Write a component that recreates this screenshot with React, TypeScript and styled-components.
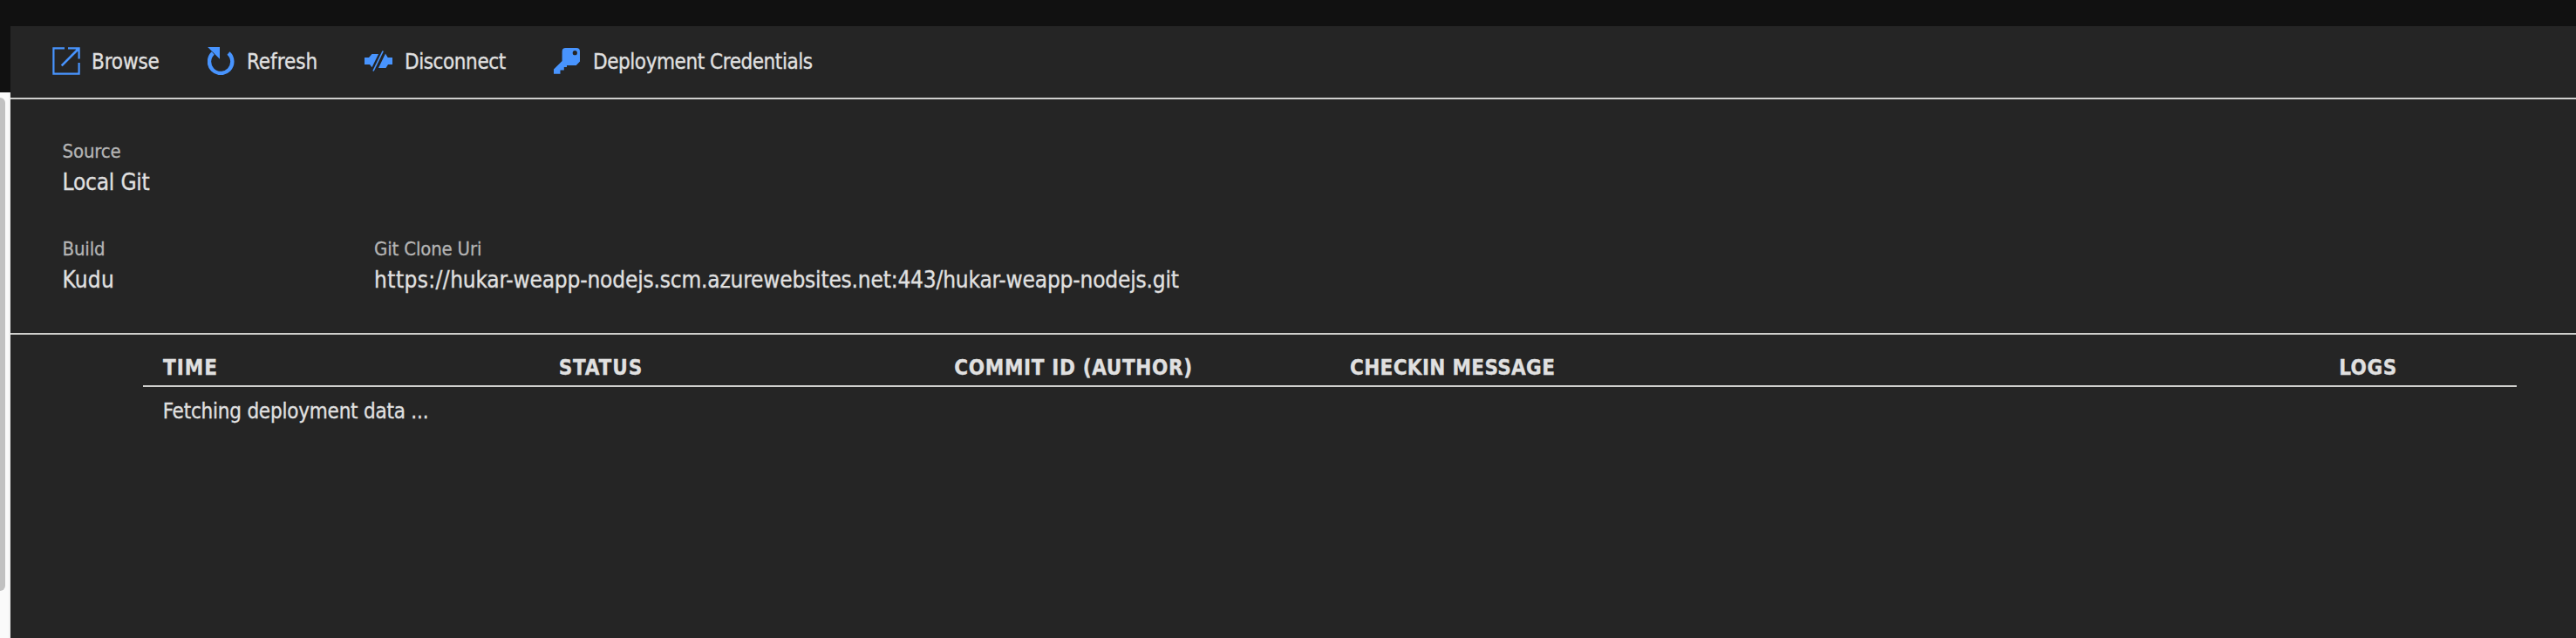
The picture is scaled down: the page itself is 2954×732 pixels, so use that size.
import React from "react";
import styled, { createGlobalStyle } from "styled-components";

const GlobalStyle = createGlobalStyle`
  * { box-sizing: border-box; }
  body {
    margin: 0;
    background: #111111;
    color: #e0e0e0;
    font-family: "DejaVu Sans Condensed", "DejaVu Sans", sans-serif;
    -webkit-text-stroke: 0.3px;
    overflow: hidden;
  }
`;

const Page = styled.div`
  display: flex;
  height: 100vh;
  padding-top: 30px;
`;

const Gutter = styled.aside`
  flex: none;
  width: 12px;
  padding-top: 76px;
`;

const ScrollTrack = styled.div`
  height: 100%;
  padding-top: 6px;
  background: #fafafa;
  border-right: 2px solid #f0f0f0;
`;

const ScrollThumb = styled.div`
  width: 6px;
  height: 566px;
  background: #c1c1c1;
  border-radius: 0 6px 6px 0;
`;

const Panel = styled.main`
  flex: 1;
  background: #252525;
`;

const Toolbar = styled.nav`
  display: flex;
  height: 84px;
  padding: 24px 48px 0;
  border-bottom: 2px solid #cfcfcd;
`;

const Command = styled.button<{ $width: number; $gap: number; $tracking: number }>`
  display: flex;
  flex: none;
  align-items: flex-start;
  gap: ${(p) => p.$gap}px;
  width: ${(p) => p.$width}px;
  height: 35px;
  padding: 0;
  border: 0;
  background: none;
  color: inherit;
  font: 24px/35px "DejaVu Sans Condensed", "DejaVu Sans", sans-serif;
  letter-spacing: ${(p) => p.$tracking}px;
  white-space: nowrap;
`;

const Icon = styled.svg`
  flex: none;
  width: 32px;
  height: 32px;
  color: #4894fe;
`;

const Details = styled.section`
  display: grid;
  grid-template-columns: 357.5px 1fr;
  row-gap: 42px;
  height: 270px;
  padding: 44px 59px 42px 59.6px;
  border-bottom: 2px solid #cfcfcd;
`;

const Field = styled.div<{ $wide?: boolean }>`
  grid-column: ${(p) => (p.$wide ? "1 / -1" : "auto")};
`;

const FieldLabel = styled.div`
  color: #b4b4b4;
  font-size: 22px;
  line-height: 32px;
  letter-spacing: -0.18px;
`;

const FieldValue = styled.div<{ $tracking: number }>`
  font-size: 26px;
  line-height: 38px;
  letter-spacing: ${(p) => p.$tracking}px;
`;

const UriScheme = styled.span`
  letter-spacing: 0.4px;
`;

const Deployments = styled.section`
  margin: 0 68px 0 152px;
`;

const HeaderRow = styled.div`
  display: grid;
  grid-template-columns: 2fr 2fr 2fr 5fr 1fr;
  height: 60px;
  padding-top: 22px;
  border-bottom: 2px solid #cfcfcd;
`;

const HeaderCell = styled.div<{ $tracking: number }>`
  padding-left: 23px;
  font-size: 24px;
  font-weight: 700;
  line-height: 32px;
  letter-spacing: ${(p) => p.$tracking}px;
  white-space: nowrap;
`;

const StatusRow = styled.div`
  padding: 12px 22.7px;
  font-size: 24px;
  line-height: 32px;
  letter-spacing: -0.22px;
`;

const BrowseIcon = () => (
  <Icon viewBox="0 0 32 32" fill="none" stroke="currentColor">
    <path d="M14 1.4H1.4V30.6H30.6V18M18 1.4H30.6V13.5" strokeWidth="2.2" />
    <path d="M10.7 21.3L29.5 2.5" strokeWidth="2.6" />
    <path d="M26 1.5H31V6.5Z" fill="currentColor" stroke="none" />
  </Icon>
);

const RefreshIcon = () => (
  <Icon viewBox="0 0 32 32" fill="none">
    <path d="M24 7A13.2 13.2 0 1 1 6.3 7" stroke="currentColor" strokeWidth="4.4" />
    <path d="M0.2 0H14V13.7Z" fill="currentColor" />
  </Icon>
);

const DisconnectIcon = () => (
  <Icon viewBox="0 0 32 32" fill="currentColor">
    <path d="M0 12H5L8.5 8H16L8.5 23.3L6 20H0Z" />
    <path d="M24 7.5L26.7 12H32V20H27L24.5 24H16Z" />
    <path d="M21.2 4.5L10 27.5" fill="none" stroke="currentColor" strokeWidth="1.7" />
  </Icon>
);

const KeyIcon = () => (
  <Icon viewBox="0 0 32 32" fill="currentColor">
    <path
      fillRule="evenodd"
      d="M14.6 1H27Q31 1 31 5V16.5L26.7 21H16V23H12.8V26.5H8.5V30.8H1V25.5L10.6 16V5Q10.6 1 14.6 1ZM25.3 4.1A2.6 2.6 0 1 0 25.3 9.3A2.6 2.6 0 1 0 25.3 4.1Z"
    />
  </Icon>
);

const commands = [
  { label: "Browse", icon: <BrowseIcon />, width: 178, gap: 13, tracking: -0.15 },
  { label: "Refresh", icon: <RefreshIcon />, width: 180, gap: 13, tracking: -0.05 },
  { label: "Disconnect", icon: <DisconnectIcon />, width: 216, gap: 14, tracking: -0.42 },
  { label: "Deployment Credentials", icon: <KeyIcon />, width: 310, gap: 14, tracking: -0.44 },
];

const columns = [
  { title: "TIME", tracking: 1 },
  { title: "STATUS", tracking: 0.9 },
  { title: "COMMIT ID (AUTHOR)", tracking: 0.64 },
  { title: "CHECKIN MESSAGE", tracking: 0.33 },
  { title: "LOGS", tracking: 0.5 },
];

export default function App() {
  return (
    <>
      <GlobalStyle />
      <Page>
        <Gutter>
          <ScrollTrack>
            <ScrollThumb />
          </ScrollTrack>
        </Gutter>
        <Panel>
          <Toolbar>
            {commands.map((c) => (
              <Command key={c.label} $width={c.width} $gap={c.gap} $tracking={c.tracking}>
                {c.icon}
                <span>{c.label}</span>
              </Command>
            ))}
          </Toolbar>
          <Details>
            <Field $wide>
              <FieldLabel>Source</FieldLabel>
              <FieldValue $tracking={-0.2}>Local Git</FieldValue>
            </Field>
            <Field>
              <FieldLabel>Build</FieldLabel>
              <FieldValue $tracking={0.2}>Kudu</FieldValue>
            </Field>
            <Field>
              <FieldLabel>Git Clone Uri</FieldLabel>
              <FieldValue $tracking={-0.18}>
                <UriScheme>https://</UriScheme>
                hukar-weapp-nodejs.scm.azurewebsites.net:443/hukar-weapp-nodejs.git
              </FieldValue>
            </Field>
          </Details>
          <Deployments>
            <HeaderRow>
              {columns.map((c) => (
                <HeaderCell key={c.title} $tracking={c.tracking}>
                  {c.title}
                </HeaderCell>
              ))}
            </HeaderRow>
            <StatusRow>Fetching deployment data ...</StatusRow>
          </Deployments>
        </Panel>
      </Page>
    </>
  );
}
